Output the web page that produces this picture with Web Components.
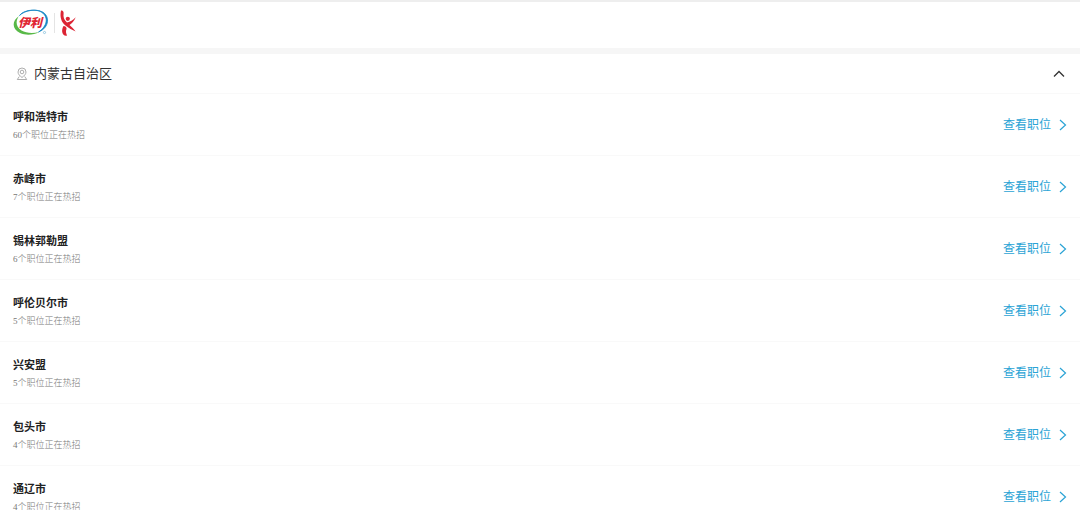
<!DOCTYPE html>
<html lang="zh-CN">
<head>
<meta charset="utf-8">
<meta name="viewport" content="width=device-width, initial-scale=1">
<title>伊利招聘</title>
<style>
  body {
    margin: 0;
    background: #fff;
    color: #333;
    font-family: "Liberation Sans", "Noto Sans CJK SC", sans-serif;
  }
</style>
</head>
<body>
<site-header></site-header>
<main>
  <region-group name="内蒙古自治区">
    <city-row name="呼和浩特市" count="60"></city-row>
    <city-row name="赤峰市" count="7"></city-row>
    <city-row name="锡林郭勒盟" count="6"></city-row>
    <city-row name="呼伦贝尔市" count="5"></city-row>
    <city-row name="兴安盟" count="5"></city-row>
    <city-row name="包头市" count="4"></city-row>
    <city-row name="通辽市" count="4"></city-row>
  </region-group>
</main>

<script>
class SiteHeader extends HTMLElement {
  constructor() {
    super();
    this.attachShadow({ mode: 'open' });
  }

  connectedCallback() {
    this.shadowRoot.innerHTML = `
      <style>
        :host {
          display: block;
          border-top: 2px solid #eee;
          border-bottom: 6px solid #f6f6f6;
        }
        header {
          display: flex;
          padding: 4px 12px 10px;
        }
        a { display: block; }
        svg { display: block; }
        text { font-family: "Noto Sans CJK SC", sans-serif; }
      </style>
      <header>
        <a href="#" aria-label="伊利">
          <svg width="68" height="32" viewBox="12 7 68 32">
            <!-- ring -->
            <path d="M19.500 16.500C25 11 37 9.500 42 13.500C49 18.500 47 27.500 38.500 33C50 28.500 50 16 41.500 12.500C34 9.500 23 11.500 19.500 16.500Z" fill="#1687c5" stroke="#1687c5" stroke-width=".8"/>
            <path d="M19 17C11.500 22 12 30.500 20 34C26 36.800 34 36 39 33C33 34.500 26 34.200 21.500 31.500C15.500 28 15.500 21.500 19 17Z" fill="#58b947"/>
            <text x="18" y="28" font-size="12" font-weight="900" font-style="italic" fill="#df2633">伊利</text>
            <circle cx="44.500" cy="33.500" r="1.100" fill="none" stroke="#67aed1" stroke-width=".6"/>
            <path d="M54.500 14V34" stroke="#e4e4e4"/>
            <!-- dancing figure -->
            <g fill="#dc2434">
              <circle cx="67.800" cy="19.800" r="2.100"/>
              <path d="M61 11.500C62.600 11 64 12.500 63.600 14.500C63 18 64.200 21 67 23.500C70 23 73 21 75.700 18.300C74.500 22 71.500 24.500 69.500 26C71.500 28 74 30 75.600 32.500C72.500 31 68.500 29 65.500 26.500C61.500 23.500 59.500 18 61 11.500Z"/>
              <path d="M63.500 27C65.500 27 67 28.500 66.500 30C65.500 32.500 66 34 67 36.500C65 37.500 62.600 35.500 62.200 33C62 31 62.300 29 63.500 27Z"/>
            </g>
          </svg>
        </a>
      </header>
    `;
  }
}

class RegionGroup extends HTMLElement {
  constructor() {
    super();
    this.attachShadow({ mode: 'open' });
  }

  connectedCallback() {
    this.render();
    this.button = this.shadowRoot.querySelector('button');
    this.button.addEventListener('click', () => this.toggle());
  }

  toggle() {
    const open = this.button.getAttribute('aria-expanded') === 'true';
    this.button.setAttribute('aria-expanded', String(!open));
    this.shadowRoot.querySelector('.cities').hidden = open;
  }

  render() {
    this.shadowRoot.innerHTML = `
      <style>
        :host { display: block; }
        h2 { margin: 0; }
        button {
          display: flex;
          align-items: center;
          width: 100%;
          padding: 10px 15px 9px 16px;
          border: 0;
          border-bottom: 1px solid #f9f9f9;
          background: #fff;
          color: #333;
          font: 13px/20px "Liberation Sans", "Noto Sans CJK SC", sans-serif;
          text-align: left;
          cursor: pointer;
        }
        .name { flex: 1; padding-left: 6px; }
        svg { display: block; fill: none; }
        button[aria-expanded="false"] .arrow { transform: rotate(180deg); }
      </style>
      <h2>
        <button type="button" aria-expanded="true">
          <svg width="12" height="14" viewBox="0 0 12 14" stroke="#999" stroke-width=".8">
            <path d="M6 10.500C3.800 8.800 2 7.200 2 5A4 4 0 0 1 10 5C10 7.200 8.200 8.800 6 10.500Z"/>
            <circle cx="6" cy="5" r="1.800"/>
            <path d="M3.300 9.500L1.300 12.500H10.700L8.700 9.500"/>
          </svg>
          <span class="name">${this.getAttribute('name')}</span>
          <svg class="arrow" width="12" height="8" viewBox="0 0 12 8" stroke="#333" stroke-width="1.300">
            <path d="M1 6.500L6 1.500L11 6.500"/>
          </svg>
        </button>
      </h2>
      <div class="cities"><slot></slot></div>
    `;
  }
}

class CityRow extends HTMLElement {
  constructor() {
    super();
    this.attachShadow({ mode: 'open' });
  }

  connectedCallback() {
    this.render();
  }

  render() {
    this.shadowRoot.innerHTML = `
      <style>
        :host {
          display: flex;
          align-items: center;
          justify-content: space-between;
          padding: 13px 13px 12px;
          border-bottom: 1px solid #f9f9f9;
        }
        h3, p { margin: 0; }
        h3 {
          color: #222;
          font-size: 11px;
          font-weight: 700;
          line-height: 20px;
        }
        p {
          color: #777;
          font: 300 9px/16px "Liberation Serif", "Noto Sans CJK SC", serif;
        }
        a {
          display: flex;
          align-items: center;
          gap: 8px;
          color: #2aa3d5;
          font-size: 12px;
          line-height: 18px;
          text-decoration: none;
        }
        svg { display: block; fill: none; stroke: currentColor; }
      </style>
      <div>
        <h3>${this.getAttribute('name')}</h3>
        <p>${this.getAttribute('count')}个职位正在热招</p>
      </div>
      <a href="#">查看职位
        <svg width="8" height="12" viewBox="0 0 8 12" stroke-width="1.200">
          <path d="M1 1L6.500 6L1 11"/>
        </svg>
      </a>
    `;
  }
}

customElements.define('site-header', SiteHeader);
customElements.define('region-group', RegionGroup);
customElements.define('city-row', CityRow);
</script>
</body>
</html>
